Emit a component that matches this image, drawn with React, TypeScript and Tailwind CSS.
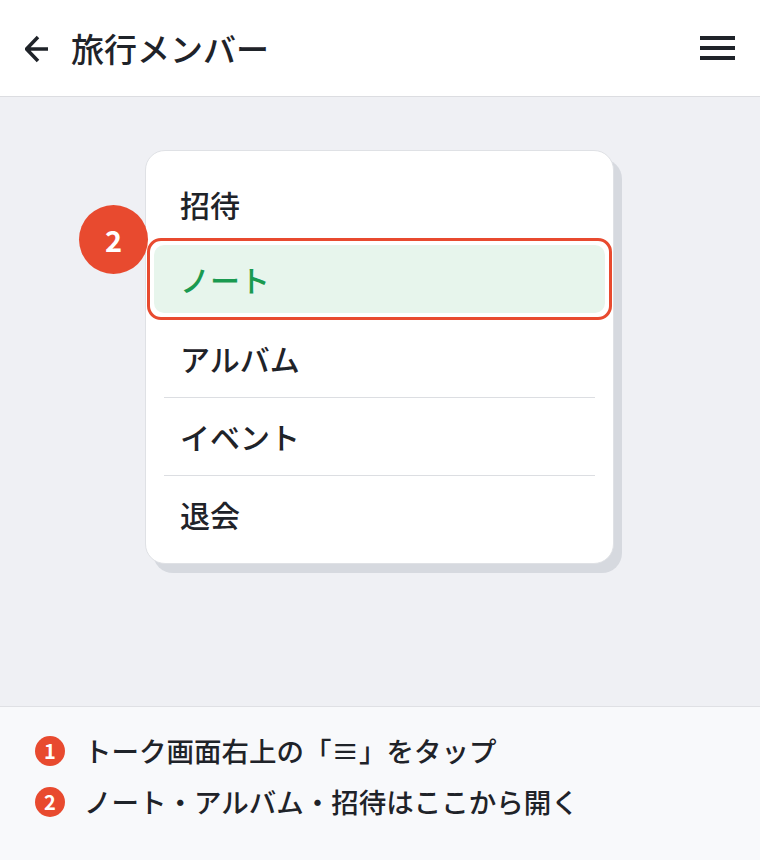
import React from "react";

const FONT = '"Noto Sans CJK JP", "Noto Sans", sans-serif';

function Row({ label, border }: { label: string; border?: boolean }) {
  return (
    <div className={`mx-[18px] flex h-[78px] items-center pl-[16px] ${border ? "border-b border-[#dcdee2]" : ""}`}>
      <span className="text-[30px] font-medium text-[#1f2329]">{label}</span>
    </div>
  );
}

export default function App() {
  return (
    <div className="flex h-[860px] w-[760px] flex-col overflow-hidden bg-white" style={{ fontFamily: FONT }}>
      <header className="flex h-[97px] shrink-0 items-center border-b border-[#dcdde1] bg-white pl-[25px] pr-[25px]">
        <svg width="24" height="28" viewBox="0 0 24 28" className="mt-[1px]">
          <path d="M13 2 L1.5 14 L13 26 M1.5 14 H23" fill="none" stroke="#1f2329" strokeWidth="3.5" strokeLinejoin="miter" />
        </svg>
        <h1 className="ml-[22px] text-[33px] font-medium leading-none text-[#1f2329]">旅行メンバー</h1>
        <div className="ml-auto flex w-[35px] flex-col gap-[6px]">
          <span className="block h-[4px] w-[35px] bg-[#1f2329]" />
          <span className="block h-[4px] w-[35px] bg-[#1f2329]" />
          <span className="block h-[4px] w-[35px] bg-[#1f2329]" />
        </div>
      </header>

      <main className="flex-1 bg-[#eff0f4] pl-[145px] pt-[53px]">
        <div className="relative w-[469px] rounded-[20px] border border-[#dfe1e5] bg-white pb-[10px] pt-[15px] shadow-[8px_9px_0_#d6d9df]">
          <div className="absolute left-[-67px] top-[54px] flex h-[69px] w-[69px] items-center justify-center rounded-full bg-[#e84a2f] text-[29px] font-bold text-white">
            2
          </div>
          <div className="mx-[18px] flex h-[76px] items-center pl-[16px]">
            <span className="text-[30px] font-medium text-[#1f2329]">招待</span>
          </div>
          <div className="mx-[1px] mt-[-4px] h-[82px] rounded-[14px] border-[3px] border-[#e84a2f] p-[4px]">
            <div className="flex h-full items-center rounded-[10px] bg-[#e7f5ec] pl-[26px]">
              <span className="text-[30px] font-medium text-[#1a9a50]">ノート</span>
            </div>
          </div>
          <Row label="アルバム" border />
          <Row label="イベント" border />
          <div className="mx-[18px] flex h-[77px] items-center pl-[16px]">
            <span className="text-[30px] font-medium text-[#1f2329]">退会</span>
          </div>
        </div>
      </main>

      <footer className="h-[154px] shrink-0 border-t border-[#dfe0e4] bg-[#f8f9fb] px-[35px] pt-[21px]">
        <div className="flex h-[46px] items-center gap-[19px]">
          <span className="flex h-[30px] w-[30px] items-center justify-center rounded-full bg-[#e84a2f] text-[20px] font-bold leading-none text-white">1</span>
          <span className="text-[27.5px] font-medium text-[#1f2329]">トーク画面右上の「≡」をタップ</span>
        </div>
        <div className="mt-[5px] flex h-[46px] items-center gap-[19px]">
          <span className="flex h-[30px] w-[30px] items-center justify-center rounded-full bg-[#e84a2f] text-[20px] font-bold leading-none text-white">2</span>
          <span className="text-[27.5px] font-medium text-[#1f2329]">ノート・アルバム・招待はここから開く</span>
        </div>
      </footer>
    </div>
  );
}
